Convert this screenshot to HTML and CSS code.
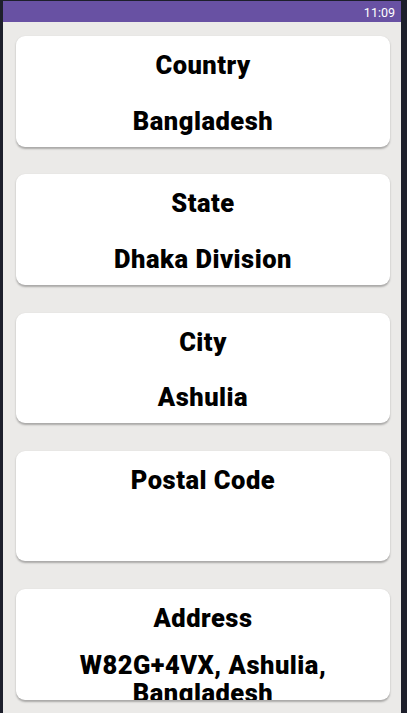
FILE: index.html
```html
<!DOCTYPE html>
<html>
<head>
<meta charset="utf-8">
<link rel="stylesheet" href="styles.css">
</head>
<body>
<div class="frame">
  <div class="screen">
    <div class="statusbar"><span class="time">11:09</span></div>
    <div class="content">
      <div class="card">
        <div class="label">Country</div>
        <div class="value">Bangladesh</div>
      </div>
      <div class="card">
        <div class="label">State</div>
        <div class="value">Dhaka Division</div>
      </div>
      <div class="card">
        <div class="label">City</div>
        <div class="value">Ashulia</div>
      </div>
      <div class="card">
        <div class="label">Postal Code</div>
        <div class="value"></div>
      </div>
      <div class="card">
        <div class="label">Address</div>
        <div class="value value-multi">W82G+4VX, Ashulia, Bangladesh</div>
      </div>
    </div>
  </div>
</div>
</body>
</html>
```

FILE: styles.css
```css
html, body {
  margin: 0;
  padding: 0;
  background: #1d1f2b;
  width: 407px;
  height: 713px;
  overflow: hidden;
}
.frame {
  padding: 1px 6px 0 3px;
  height: 712px;
}
.screen {
  width: 398px;
  height: 712px;
  background: #ebeae8;
  display: flex;
  flex-direction: column;
  font-family: Roboto, "Liberation Sans", sans-serif;
  overflow: hidden;
}
.statusbar {
  height: 21px;
  background: #6851a3;
  display: flex;
  align-items: center;
  justify-content: flex-end;
  padding-right: 6px;
}
.time {
  color: #ffffff;
  font-size: 12.5px;
  line-height: 14px;
  margin-top: 2px;
}
.content {
  padding: 14px 11px 0 13px;
  display: flex;
  flex-direction: column;
  gap: 27.75px;
}
.card {
  height: 110.5px;
  background: #ffffff;
  border-radius: 9px;
  box-shadow: 0 1.5px 2px rgba(0,0,0,0.28);
  overflow: hidden;
  display: flex;
  flex-direction: column;
  align-items: center;
  text-align: center;
  color: #000;
  font-weight: 900;
  font-size: 25.5px;
  letter-spacing: 0.5px;
  line-height: 28px;
}
.label {
  margin-top: 15px;
}
.value {
  margin-top: 27.5px;
  min-height: 28px;
}
.value-multi {
  margin-top: 19px;
  padding: 0 20px;
}
```
